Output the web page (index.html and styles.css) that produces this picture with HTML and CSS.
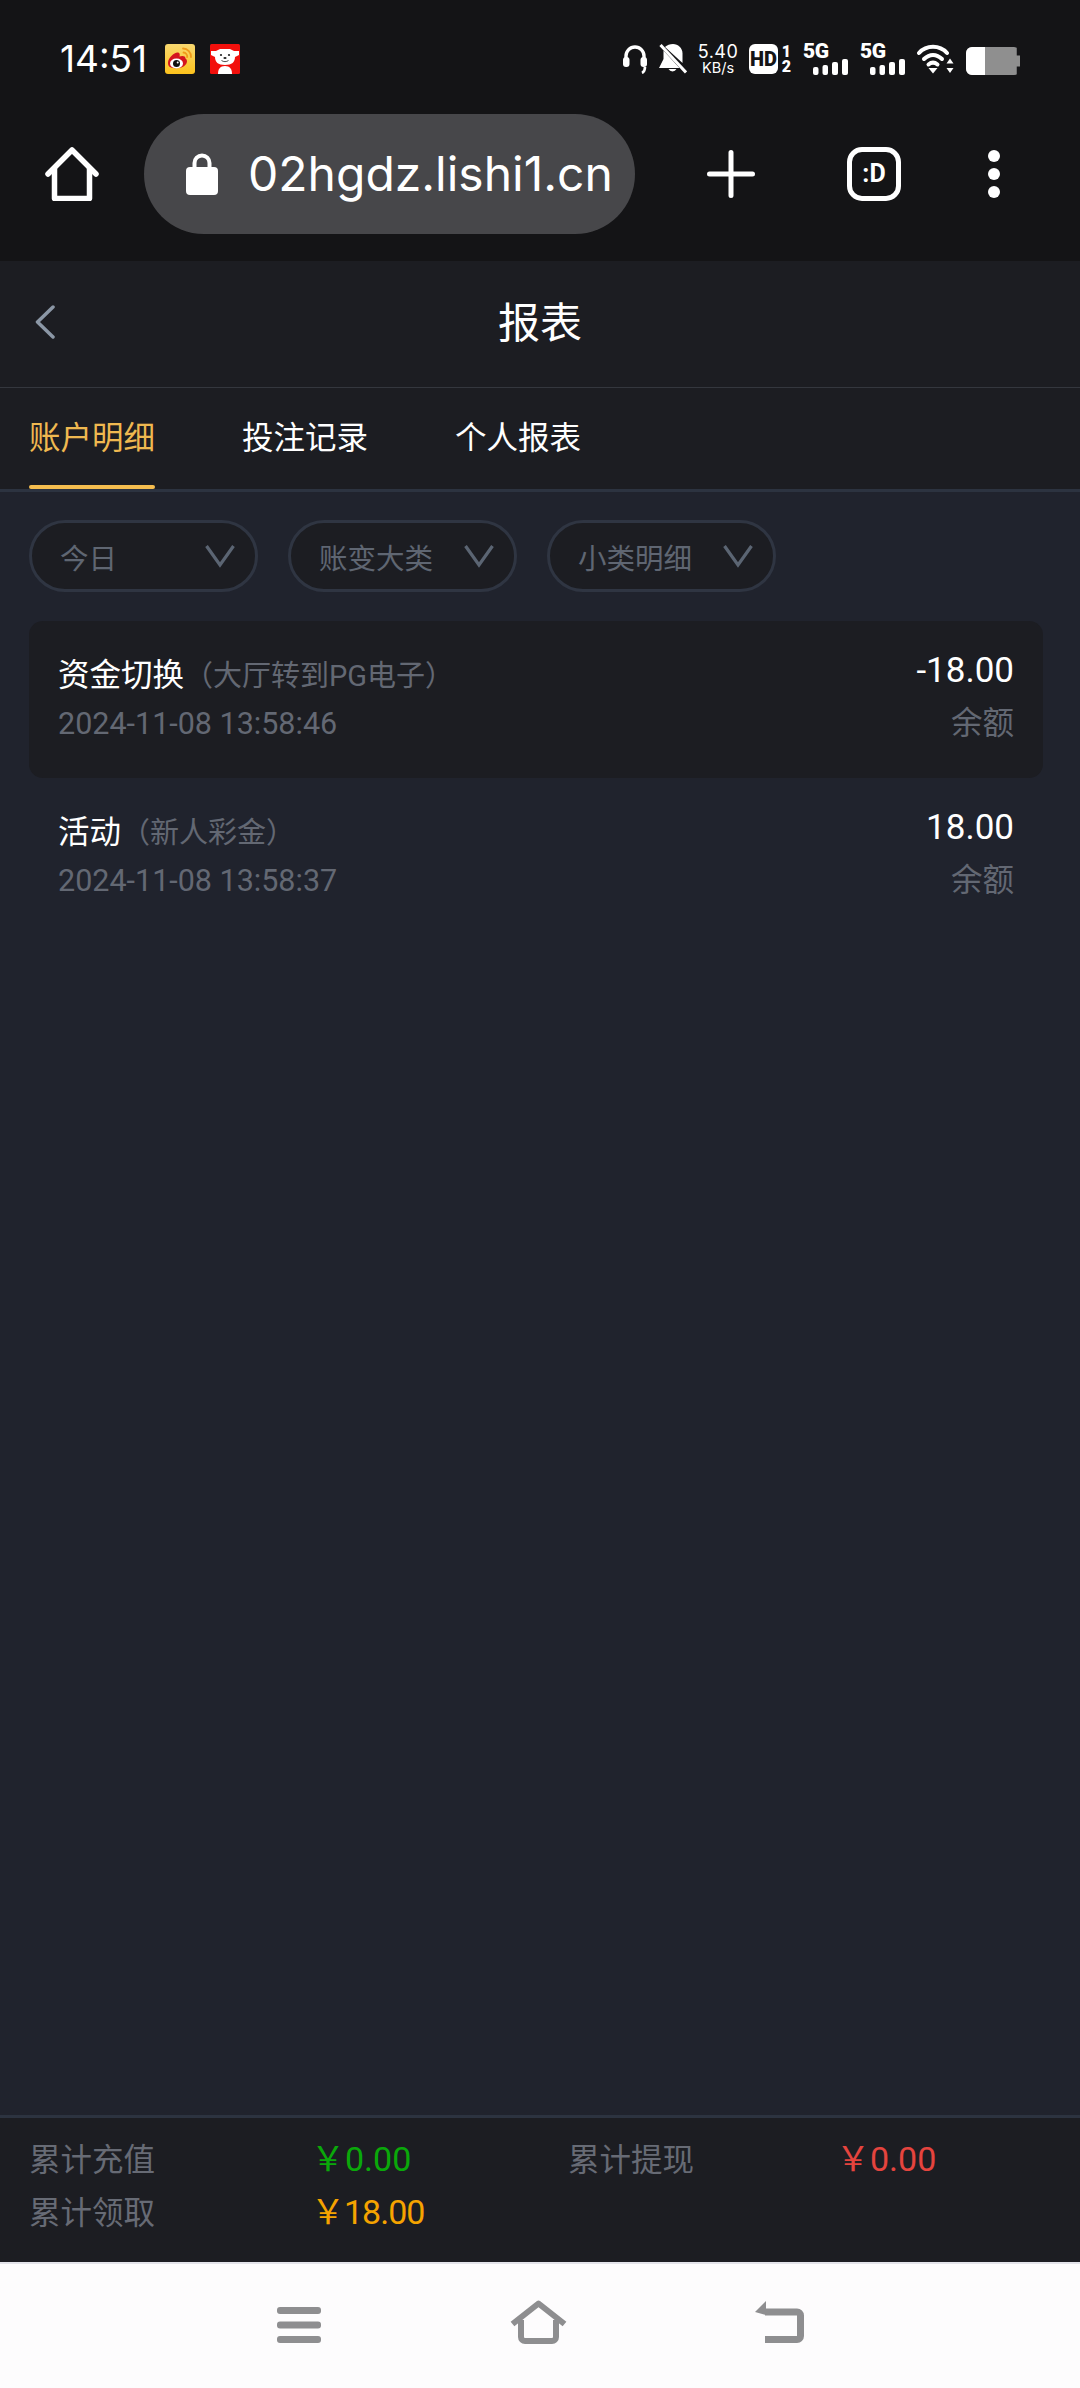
FILE: index.html
```html
<!DOCTYPE html>
<html lang="zh-CN">
<head>
  <meta charset="UTF-8">
  <meta name="viewport" content="width=device-width, initial-scale=1.0">
  <title>报表</title>
  <link rel="stylesheet" href="styles.css">
</head>
<body>
  <div class="status-bar">
    <span class="time">14:51</span>
    <svg class="app-icon" viewBox="0 0 30 30">
      <defs>
        <linearGradient id="wb" x1="0" y1="0" x2="0" y2="1">
          <stop offset="0" stop-color="#f8d870"/>
          <stop offset="1" stop-color="#fcc21c"/>
        </linearGradient>
      </defs>
      <rect width="30" height="30" rx="3" fill="url(#wb)"/>
      <path d="M18 4.500a8 8 0 0 1 8 8.500M18.500 8.500a4 4 0 0 1 3.700 4.500" fill="none" stroke="#f09a1a" stroke-width="1.800" stroke-linecap="round"/>
      <path d="M3 19c0-5 6-10.500 9.500-10.500 2.500 0 2.500 2.500 2 4 3-1 6-.6 6 2 .8.500 1.500 1.500 1.500 2.800 0 3.700-4.700 7-10 7S3 23.500 3 19z" fill="#d4141e"/>
      <ellipse cx="11.500" cy="19.500" rx="6.500" ry="5" fill="#fff"/>
      <circle cx="11.500" cy="19.500" r="3.500" fill="#111"/>
      <circle cx="12.700" cy="18.500" r="1" fill="#fff"/>
    </svg>
    <svg class="app-icon" viewBox="0 0 30 30">
      <rect width="30" height="30" rx="1.500" fill="#f2100c"/>
      <path d="M1 7l5 0 4-2h10l4 2 5 0 0 4-4 2c0 5-3 8-10 8S5 18 5 13L1 11z" fill="#fff"/>
      <path d="M8 30c0-5 2-8 7-8s7 3 7 8z" fill="#fff"/>
      <circle cx="11" cy="11" r="1.100" fill="#222"/>
      <circle cx="19" cy="11" r="1.100" fill="#222"/>
      <ellipse cx="15" cy="14" rx="1.600" ry="1.100" fill="#222"/>
      <path d="M11.500 16.500c2 1.500 5 1.500 7 0" fill="none" stroke="#222" stroke-width=".8"/>
    </svg>

    <div class="status-right">
      <svg class="st-phones" viewBox="0 0 24 30" fill="none" stroke="#fff">
        <path d="M3 16V12a9 9 0 0 1 18 0v4" stroke-width="3.400"/>
        <rect x="0" y="13" width="6.500" height="10" rx="3" fill="#fff" stroke="none"/>
        <rect x="17.500" y="13" width="6.500" height="10" rx="3" fill="#fff" stroke="none"/>
        <path d="M22 23c0 3-1 5-3 6" stroke-width="2.600"/>
      </svg>
      <svg class="st-bell" viewBox="0 0 28 30">
        <path d="M6 3C8 1 11 0 14 0c5 0 9.500 4 9.500 9.500V19z" fill="#fff"/>
        <path d="M4.500 6.500V15L0 24h20.500z" fill="#fff"/>
        <path d="M9.500 25h8a4.500 4.500 0 0 1-8 0z" fill="#fff"/>
        <path d="M1.500 1L27 28.500" stroke="#fff" stroke-width="3"/>
      </svg>
      <div class="st-speed">
        <span class="speed-num">5.40</span>
        <span class="speed-unit">KB/s</span>
      </div>
      <div class="st-hd">
        <span class="hd-box">HD</span>
        <div class="hd-sims"><span>1</span><span>2</span></div>
      </div>
      <div class="st-signal">
        <span class="sig-label">5G</span>
        <svg class="sig-bars" viewBox="0 0 35 16" fill="#fff">
          <rect x="0" y="8" width="5.500" height="8" rx="2"/>
          <rect x="9.500" y="6" width="5.500" height="10" rx="2"/>
          <rect x="19" y="3" width="6" height="13" rx="2"/>
          <rect x="29" y="0" width="6" height="16" rx="2"/>
        </svg>
      </div>
      <div class="st-signal">
        <span class="sig-label">5G</span>
        <svg class="sig-bars" viewBox="0 0 35 16" fill="#fff">
          <rect x="0" y="8" width="5.500" height="8" rx="2"/>
          <rect x="9.500" y="6" width="5.500" height="10" rx="2"/>
          <rect x="19" y="3" width="6" height="13" rx="2"/>
          <rect x="29" y="0" width="6" height="16" rx="2"/>
        </svg>
      </div>
      <svg class="st-wifi" viewBox="0 0 37 30" fill="none" stroke="#fff" stroke-width="4" stroke-linecap="round">
        <path d="M2 9C9.500 .8 22.500 .8 30 9"/>
        <path d="M7 15c5.500-5.500 12.500-5.500 18 0"/>
        <path d="M11.500 20.500c3-2.500 6-2.500 9 0"/>
        <path d="M11.500 24h9L16 29.500z" fill="#fff" stroke="none"/>
        <path d="M33 14.500l3.500 5h-7zM33 29l-3.500-5h7z" fill="#fff" stroke="none"/>
      </svg>
      <div class="st-battery">
        <span class="battery-fill"></span>
      </div>
    </div>
  </div>

  <div class="toolbar">
    <svg class="tb-home" viewBox="0 0 54 54" fill="none" stroke="#fff" stroke-width="5.500" stroke-linecap="round" stroke-linejoin="round">
      <path d="M3 27L27 3l24 24"/>
      <path d="M9.500 22v29.500h35V22"/>
    </svg>
    <div class="url-pill">
      <svg class="lock" viewBox="0 0 32 42">
        <path d="M8.500 17V10a7.500 7.500 0 0 1 15 0v7" fill="none" stroke="#fff" stroke-width="4"/>
        <rect y="14" width="32" height="28" rx="4" fill="#fff"/>
      </svg>
      <span class="url-text">02hgdz.lishi1.cn</span>
    </div>
    <svg class="tb-plus" viewBox="0 0 48 48" stroke="#fff" stroke-width="5" stroke-linecap="round">
      <path d="M24 2.500v43M2.500 24h43"/>
    </svg>
    <div class="tb-tabs">:D</div>
    <svg class="tb-dots" viewBox="0 0 12 48" fill="#fff">
      <circle cx="6" cy="6" r="6"/>
      <circle cx="6" cy="24" r="6"/>
      <circle cx="6" cy="42" r="6"/>
    </svg>
  </div>

  <header class="page-header">
    <svg class="back" viewBox="0 0 20 34" fill="none" stroke="#8b97a6" stroke-width="3.500" stroke-linecap="round" stroke-linejoin="round">
      <path d="M18 2L2.500 17 18 32"/>
    </svg>
    <h1>报表</h1>
  </header>

  <nav class="tabs">
    <a class="tab active">账户明细</a>
    <a class="tab">投注记录</a>
    <a class="tab">个人报表</a>
  </nav>

  <main>
    <div class="filters">
      <div class="filter">
        <span>今日</span>
        <svg class="filter-arrow" viewBox="0 0 30 24" fill="none" stroke="#5b6573" stroke-width="3.200"><path d="M1.500 2L15 21 28.500 2"/></svg>
      </div>
      <div class="filter">
        <span>账变大类</span>
        <svg class="filter-arrow" viewBox="0 0 30 24" fill="none" stroke="#5b6573" stroke-width="3.200"><path d="M1.500 2L15 21 28.500 2"/></svg>
      </div>
      <div class="filter">
        <span>小类明细</span>
        <svg class="filter-arrow" viewBox="0 0 30 24" fill="none" stroke="#5b6573" stroke-width="3.200"><path d="M1.500 2L15 21 28.500 2"/></svg>
      </div>
    </div>

    <ul class="records">
      <li class="record highlight">
        <div class="record-left">
          <p class="record-title">资金切换<span class="record-sub">（大厅转到PG电子）</span></p>
          <p class="record-time">2024-11-08 13:58:46</p>
        </div>
        <div class="record-right">
          <p class="record-amount">-18.00</p>
          <p class="record-balance">余额</p>
        </div>
      </li>
      <li class="record">
        <div class="record-left">
          <p class="record-title">活动<span class="record-sub">（新人彩金）</span></p>
          <p class="record-time">2024-11-08 13:58:37</p>
        </div>
        <div class="record-right">
          <p class="record-amount">18.00</p>
          <p class="record-balance">余额</p>
        </div>
      </li>
    </ul>
  </main>

  <footer class="summary">
    <span class="sum-label">累计充值</span>
    <span class="sum-value green">￥0.00</span>
    <span class="sum-label">累计提现</span>
    <span class="sum-value red">￥0.00</span>
    <span class="sum-label">累计领取</span>
    <span class="sum-value amber">￥18.00</span>
  </footer>

  <div class="system-nav">
    <svg class="nav-menu" viewBox="0 0 44 36" fill="#8e8e90">
      <rect width="44" height="7" rx="3"/>
      <rect y="14.500" width="44" height="7" rx="3"/>
      <rect y="29" width="44" height="7" rx="3"/>
    </svg>
    <svg class="nav-home" viewBox="0 0 57 44" fill="none" stroke="#8e8e90" stroke-width="6" stroke-linejoin="round">
      <path d="M2.500 24L28.500 3.500 54.500 24"/>
      <path d="M11 20v17a4 4 0 0 0 4 4h27a4 4 0 0 0 4-4V20"/>
    </svg>
    <svg class="nav-back" viewBox="0 0 49 42" fill="none" stroke="#8e8e90" stroke-width="7">
      <path d="M10 11h32a3.500 3.500 0 0 1 3.500 3.500V35a3.500 3.500 0 0 1-3.500 3.500H10"/>
      <path d="M0 11L11 0v14z" fill="#8e8e90" stroke="none"/>
    </svg>
  </div>
</body>
</html>
```

FILE: styles.css
```css
*, *::before, *::after {
  margin: 0;
  padding: 0;
  box-sizing: border-box;
}

body {
  width: 1080px;
  height: 2388px;
  display: flex;
  flex-direction: column;
  background-color: #20232d;
  font-family: Roboto, "Noto Sans CJK SC", sans-serif;
  overflow: hidden;
}

svg {
  display: block;
  flex-shrink: 0;
}

/* Status bar */
.status-bar {
  height: 88px;
  padding: 44px 60px 0;
  display: flex;
  align-items: flex-start;
  background-color: #141416;
  color: #fff;
}

.time {
  font-family: Inter, sans-serif;
  font-size: 37px;
  line-height: 30px;
  width: 105px;
}

.app-icon {
  width: 30px;
  height: 30px;
  margin-right: 15px;
}

.status-right {
  margin-left: auto;
  display: flex;
  gap: 12px;
  align-items: flex-start;
}

.st-phones {
  width: 24px;
  height: 30px;
}

.st-bell {
  width: 28px;
  height: 30px;
}

.st-speed {
  width: 38px;
  height: 32px;
  display: flex;
  flex-direction: column;
  align-items: center;
  line-height: 16px;
}

.speed-num {
  font-family: Inter, sans-serif;
  font-size: 18px;
  letter-spacing: 0.5px;
}

.speed-unit {
  font-family: Inter, sans-serif;
  font-size: 14.5px;
}

.st-hd {
  width: 42px;
  height: 30px;
  display: flex;
  justify-content: space-between;
}

.hd-box {
  width: 29px;
  height: 30px;
  border-radius: 6px;
  background-color: #fff;
  color: #141416;
  font-size: 20px;
  font-weight: 900;
  line-height: 30px;
  text-align: center;
}

.hd-sims {
  display: flex;
  flex-direction: column;
  align-items: center;
  font-size: 16px;
  font-weight: 900;
  line-height: 15px;
}

.st-signal {
  width: 45px;
  height: 30px;
  display: flex;
  flex-direction: column;
}

.sig-label {
  font-size: 21px;
  font-weight: 900;
  letter-spacing: -0.5px;
  line-height: 15px;
}

.sig-bars {
  width: 35px;
  height: 16px;
  align-self: flex-end;
}

.st-wifi {
  width: 37px;
  height: 30px;
}

.st-battery {
  width: 54px;
  height: 28px;
  margin-top: 3px;
  border-radius: 6px;
  background-color: #8f8f8f;
  position: relative;
  overflow: hidden;
  clip-path: polygon(0 0, 94% 0, 94% 30%, 100% 30%, 100% 70%, 94% 70%, 94% 100%, 0 100%);
}

.battery-fill {
  position: absolute;
  left: 0;
  top: 0;
  bottom: 0;
  width: 19px;
  background-color: #fff;
}

/* Browser toolbar */
.toolbar {
  height: 173px;
  padding-left: 45px;
  padding-bottom: 2px;
  display: flex;
  align-items: center;
  background-color: #141416;
}

.tb-home {
  width: 54px;
  height: 54px;
}

.url-pill {
  width: 491px;
  height: 120px;
  margin-left: 45px;
  padding-left: 42px;
  display: flex;
  align-items: center;
  border-radius: 60px;
  background-color: #47474a;
}

.lock {
  width: 32px;
  height: 42px;
}

.url-text {
  margin-left: 30px;
  font-family: Inter, sans-serif;
  font-size: 48px;
  color: #fff;
  white-space: nowrap;
}

.tb-plus {
  width: 48px;
  height: 48px;
  margin-left: 72px;
}

.tb-tabs {
  width: 54px;
  height: 54px;
  margin-left: 92px;
  border: 5.5px solid #fff;
  border-radius: 15px;
  color: #fff;
  font-size: 25px;
  font-weight: 700;
  line-height: 43px;
  text-align: center;
}

.tb-dots {
  width: 12px;
  height: 48px;
  margin-left: 87px;
}

/* Page header */
.page-header {
  height: 127px;
  padding-bottom: 9px;
  position: relative;
  display: flex;
  align-items: center;
  justify-content: center;
  background-color: #1c1d22;
  border-bottom: 1px solid #34373e;
}

.back {
  position: absolute;
  left: 35px;
  top: 44px;
  width: 20px;
  height: 34px;
}

.page-header h1 {
  font-size: 42px;
  font-weight: 400;
  color: #fff;
}

/* Tabs */
.tabs {
  height: 104px;
  padding-left: 29px;
  display: flex;
  gap: 87px;
  background-color: #1c1d22;
  border-bottom: 3px solid #2c3340;
}

.tab {
  height: 101px;
  padding-top: 28px;
  font-size: 31.5px;
  line-height: 46px;
  color: #fff;
  position: relative;
}

.tab.active {
  color: #efb850;
}

.tab.active::after {
  content: "";
  position: absolute;
  left: 0;
  right: 0;
  bottom: 0;
  height: 4px;
  border-radius: 2px;
  background-color: #f5bd4f;
}

/* Filters */
main {
  flex: 1;
}

.filters {
  margin-top: 28px;
  padding-left: 29px;
  display: flex;
  gap: 30px;
}

.filter {
  width: 229px;
  height: 72px;
  padding: 0 20px 0 28px;
  display: flex;
  align-items: center;
  justify-content: space-between;
  border: 3px solid #2f3542;
  border-radius: 36px;
  background-color: #1c1d22;
  font-size: 28.5px;
  color: #5f6672;
}

.filter-arrow {
  width: 30px;
  height: 24px;
}

/* Records */
.records {
  margin: 29px 37px 0 29px;
  list-style: none;
}

.record {
  height: 157px;
  padding: 0 29px 0 29px;
  display: flex;
  justify-content: space-between;
  border-radius: 14px;
}

.record.highlight {
  background-color: #1c1d22;
}

.record-left {
  padding-top: 35px;
}

.record-right {
  padding-top: 30px;
  text-align: right;
}

.record-title {
  font-size: 31.5px;
  line-height: 40px;
  color: #fff;
}

.record-sub {
  font-size: 29px;
  color: #636873;
}

.record-time {
  margin-top: 8px;
  font-size: 30.5px;
  line-height: 40px;
  color: #636873;
}

.record-amount {
  font-size: 35px;
  line-height: 40px;
  color: #fff;
}

.record-balance {
  margin-top: 13px;
  font-size: 31.5px;
  line-height: 40px;
  color: #636873;
}

/* Summary */
.summary {
  height: 147px;
  padding: 12px 0 0 29px;
  display: grid;
  grid-template-columns: 282px 257px 268px 1fr;
  grid-auto-rows: 53px;
  align-items: center;
  background-color: #1c1d22;
  border-top: 3px solid #2c3340;
}

.sum-label {
  font-size: 31.5px;
  color: #676b75;
}

.sum-value {
  font-size: 34px;
}

.sum-value.green {
  color: #0aa80a;
}

.sum-value.red {
  color: #e5443e;
}

.sum-value.amber {
  color: #f5a300;
  letter-spacing: -1px;
}

/* System navigation */
.system-nav {
  height: 126px;
  padding-bottom: 2px;
  display: flex;
  align-items: center;
  justify-content: center;
  background-color: #fdfcfd;
  border-top: 2px solid #e3e3ea;
}

.nav-menu {
  width: 44px;
  height: 36px;
}

.nav-home {
  width: 57px;
  height: 44px;
  margin: 0 0 6px 189px;
}

.nav-back {
  width: 49px;
  height: 42px;
  margin: 0 0 6px 188px;
}
```
